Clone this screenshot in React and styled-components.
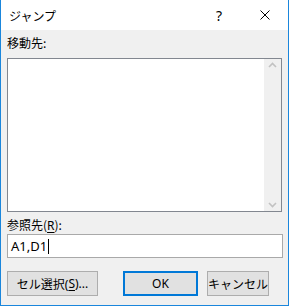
import React from "react";
import styled, { createGlobalStyle } from "styled-components";

const GlobalStyle = createGlobalStyle`
  body {
    margin: 0;
    background: #ffffff;
    font-family: "Noto Sans", "Noto Sans CJK JP", sans-serif;
  }
`;

const Window = styled.div`
  width: 289px;
  height: 306px;
  box-sizing: border-box;
  border: 1px solid #1a86dc;
  border-top: none;
  background: #f0f0f0;
  display: flex;
  flex-direction: column;
`;

const TitleBar = styled.div`
  height: 30px;
  background: #ffffff;
  display: flex;
  align-items: center;
  padding-left: 8px;
  font-size: 12px;
  color: #000;
`;

const Title = styled.div`
  flex: 1;
  font-family: "Noto Sans CJK JP", sans-serif;
`;

const TitleButton = styled.div`
  width: ${(p) => p.$w}px;
  height: 30px;
  display: flex;
  align-items: center;
  justify-content: center;
  font-size: 14px;
`;

const Body = styled.div`
  padding: 5px 0 0 6px;
  display: flex;
  flex-direction: column;
`;

const Label = styled.div`
  font-size: 12px;
  line-height: 16px;
  height: 16px;
  margin-top: ${(p) => p.$top || 0}px;
  color: #000;
  font-family: "Noto Sans CJK JP", sans-serif;
`;

const Key = styled.span`
  text-decoration: underline;
  text-underline-offset: 2px;
  font-family: "Noto Sans", sans-serif;
`;

const ListBox = styled.div`
  margin-top: 7px;
  width: 275px;
  height: 154px;
  box-sizing: border-box;
  border: 1px solid #828790;
  background: #ffffff;
  display: flex;
  justify-content: flex-end;
`;

const ScrollBar = styled.div`
  width: 17px;
  background: #f0f0f0;
  display: flex;
  flex-direction: column;
  justify-content: space-between;
  align-items: center;
  padding: 3px 0;
`;

const Input = styled.div`
  margin-top: 1px;
  width: 276px;
  height: 24px;
  box-sizing: border-box;
  border: 1px solid #a9a9a9;
  background: #ffffff;
  display: flex;
  align-items: center;
  padding-left: 3px;
  font-size: 13px;
  font-family: "Noto Sans", sans-serif;
`;

const Caret = styled.span`
  display: inline-block;
  width: 1px;
  height: 15px;
  background: #000;
  margin-left: 1px;
`;

const ButtonRow = styled.div`
  margin-top: 13px;
  display: flex;
`;

const Button = styled.div`
  width: ${(p) => p.$w}px;
  height: 25px;
  margin-left: ${(p) => p.$ml || 0}px;
  box-sizing: border-box;
  border: ${(p) => (p.$primary ? "2px solid #0078d7" : "1px solid #adadad")};
  background: #e1e1e1;
  display: flex;
  align-items: center;
  justify-content: center;
  font-size: 12px;
  color: #000;
  font-family: "Noto Sans", "Noto Sans CJK JP", sans-serif;
`;

const Chevron = ({ down }) => (
  <svg width="9" height="6" viewBox="0 0 9 6">
    <path
      d={down ? "M1 1 L4.5 4.5 L8 1" : "M1 5 L4.5 1.5 L8 5"}
      fill="none"
      stroke="#c2c2c2"
      strokeWidth="1.6"
    />
  </svg>
);

const CloseIcon = () => (
  <svg width="10" height="10" viewBox="0 0 10 10">
    <path d="M0.5 0.5 L9.5 9.5 M9.5 0.5 L0.5 9.5" stroke="#000" strokeWidth="1" />
  </svg>
);

export default function App() {
  return (
    <>
      <GlobalStyle />
      <Window>
        <TitleBar>
          <Title>ジャンプ</Title>
          <TitleButton $w={46}>?</TitleButton>
          <TitleButton $w={46}>
            <CloseIcon />
          </TitleButton>
        </TitleBar>
        <Body>
          <Label>移動先:</Label>
          <ListBox>
            <ScrollBar>
              <Chevron />
              <Chevron down />
            </ScrollBar>
          </ListBox>
          <Label $top={5}>
            参照先(<Key>R</Key>):
          </Label>
          <Input>
            A1,D1
            <Caret />
          </Input>
          <ButtonRow>
            <Button $w={91}>
              セル選択(<Key>S</Key>)...
            </Button>
            <Button $w={75} $ml={25} $primary>
              OK
            </Button>
            <Button $w={62} $ml={9}>
              キャンセル
            </Button>
          </ButtonRow>
        </Body>
      </Window>
    </>
  );
}
